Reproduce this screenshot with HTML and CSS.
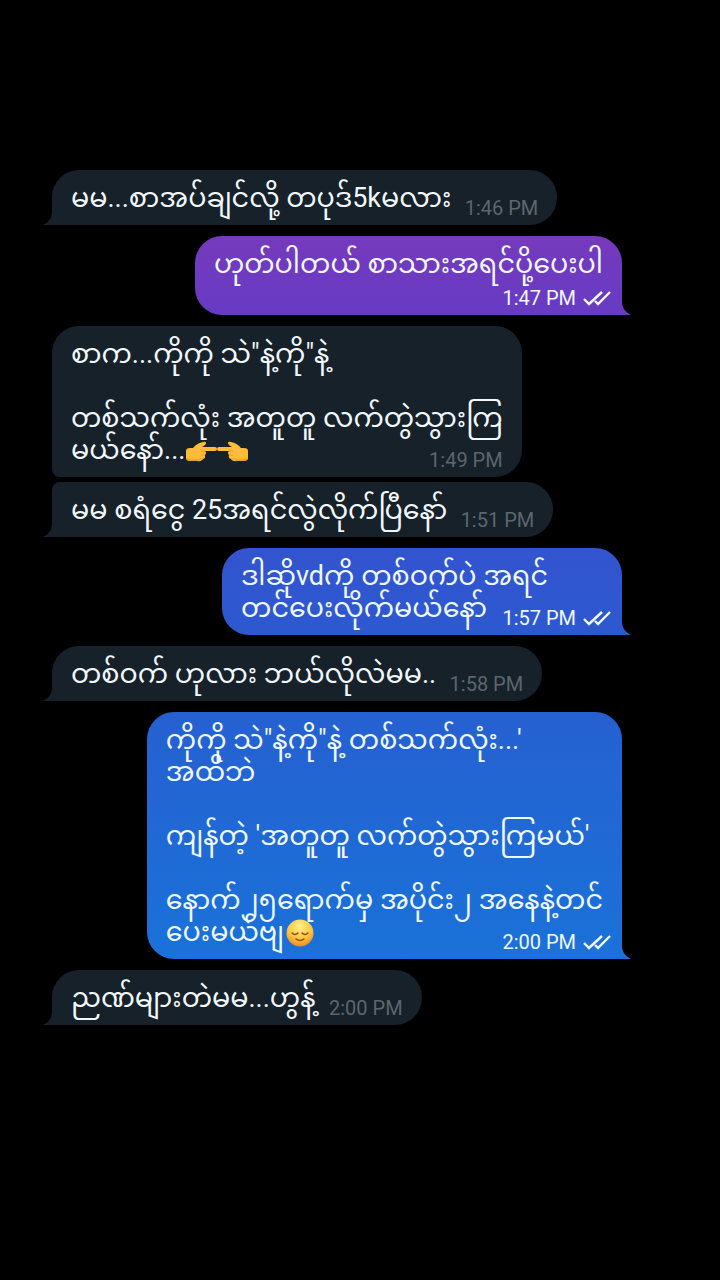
FILE: index.html
```
<!DOCTYPE html>
<html lang="my">
<head>
  <meta charset="UTF-8">
  <meta name="viewport" content="width=device-width, initial-scale=1">
  <title>Chat</title>
  <link rel="stylesheet" href="styles.css">
</head>
<body>
  <!-- shared shapes -->
  <svg class="defs" aria-hidden="true">
    <symbol id="checks" viewBox="0 0 28 16">
      <path d="M1 9 L6 14 L19 2 M12 11 L15 14 L27 2" fill="none" stroke="currentColor" stroke-width="2.400"/>
    </symbol>
    <symbol id="tail" viewBox="0 0 9 14">
      <path d="M0 0 C0 7 3 11 9 14 H0 Z" fill="currentColor"/>
    </symbol>
    <symbol id="hand" viewBox="0 0 32 24">
      <path d="M1 11 Q1 8 5 8 L8 8 Q12 3 18 2 Q21 1 21 3 Q21 5 17 7 L30 7 Q32 7 32 9 Q32 11 30 11 L20 11 Q22 13 20 15 Q21 18 18 19 Q16 22 12 21 L5 21 Q1 21 1 18 Z" fill="#ffbd37"/>
      <path d="M20 11 H16 M20 15 H16 M18 19 H14" fill="none" stroke="#e8992a" stroke-width="1"/>
      <path d="M2 19 Q6 21 14 20" fill="none" stroke="#ee9a28" stroke-width="1.500"/>
    </symbol>
  </svg>

  <main class="chat">
    <div class="message in">
      <p class="text">မမ...စာအပ်ချင်လို့ တပုဒ်5kမလား<span class="spacer"></span></p>
      <time class="time">1:46 PM</time>
      <svg class="tail"><use href="#tail"/></svg>
    </div>

    <div class="message out purple time-below">
      <p class="text">ဟုတ်ပါတယ် စာသားအရင်ပို့ပေးပါ</p>
      <time class="time">1:47 PM <svg class="checks"><use href="#checks"/></svg></time>
      <svg class="tail"><use href="#tail"/></svg>
    </div>

    <div class="message in group-first">
      <p class="text">စာက...ကိုကို သဲ"နဲ့ကို"နဲ့<br><br>တစ်သက်လုံး အတူတူ လက်တွဲသွားကြ<br>မယ်နော်...<svg class="hand" role="img" aria-label="👉"><use href="#hand"/></svg><svg class="hand flip" role="img" aria-label="👈"><use href="#hand"/></svg></p>
      <time class="time">1:49 PM</time>
    </div>

    <div class="message in group-last">
      <p class="text">မမ စရံငွေ 25အရင်လွဲလိုက်ပြီနော်<span class="spacer"></span></p>
      <time class="time">1:51 PM</time>
      <svg class="tail"><use href="#tail"/></svg>
    </div>

    <div class="message out indigo">
      <p class="text">ဒါဆိုvdကို တစ်ဝက်ပဲ အရင်<br>တင်ပေးလိုက်မယ်နော်<span class="spacer"></span></p>
      <time class="time">1:57 PM <svg class="checks"><use href="#checks"/></svg></time>
      <svg class="tail"><use href="#tail"/></svg>
    </div>

    <div class="message in">
      <p class="text">တစ်ဝက် ဟုလား ဘယ်လိုလဲမမ..<span class="spacer"></span></p>
      <time class="time">1:58 PM</time>
      <svg class="tail"><use href="#tail"/></svg>
    </div>

    <div class="message out blue">
      <p class="text">ကိုကို သဲ"နဲ့ကို"နဲ့ တစ်သက်လုံး...'<br>အထိဘဲ<br><br>ကျန်တဲ့ 'အတူတူ လက်တွဲသွားကြမယ်'<br><br>နောက်၂၅ရောက်မှ အပိုင်း၂ အနေနဲ့တင်<br>ပေးမယ်ဗျ<svg class="face" viewBox="0 0 28 28" role="img" aria-label="😌">
        <defs>
          <radialGradient id="skin" cx="50%" cy="25%" r="75%">
            <stop offset="0" stop-color="#fff08a"/>
            <stop offset="0.600" stop-color="#fcc63e"/>
            <stop offset="1" stop-color="#ee8a25"/>
          </radialGradient>
        </defs>
        <circle cx="14" cy="14" r="13.500" fill="url(#skin)"/>
        <path d="M6 14 Q9 17 12 14 M16 14 Q19 17 22 14 M10 20 Q14 23 18 20" fill="none" stroke="#8a4a16" stroke-width="1.500" stroke-linecap="round"/>
      </svg></p>
      <time class="time">2:00 PM <svg class="checks"><use href="#checks"/></svg></time>
      <svg class="tail"><use href="#tail"/></svg>
    </div>

    <div class="message in">
      <p class="text">ညဏ်များတဲမမ...ဟွန့်<span class="spacer"></span></p>
      <time class="time">2:00 PM</time>
      <svg class="tail"><use href="#tail"/></svg>
    </div>
  </main>
</body>
</html>
```

FILE: styles.css
```
* {
  box-sizing: border-box;
}
body {
  margin: 0;
  min-height: 100vh;
  background: #000;
  font-family: Roboto, "Noto Sans Myanmar", "Noto Sans", sans-serif;
}
.defs {
  display: none;
}
.chat {
  display: flex;
  flex-direction: column;
  gap: 11px;
  padding: 170px 98px 40px 52px;
}

/* text and time share one grid cell, the spacer keeps them apart */
.message {
  position: relative;
  display: grid;
  max-width: 100%;
  padding: 12px 19px 11px;
  border-radius: 27px;
}
.text,
.time {
  grid-area: 1 / 1;
}
.text {
  margin: 0;
  font-size: 27px;
  line-height: 32px;
}
.time {
  align-self: end;
  justify-self: end;
  font-size: 20px;
  line-height: 24px;
  margin-bottom: -6px;
  white-space: nowrap;
}
.spacer {
  display: inline-block;
  width: 87px;
}
.time-below .time {
  grid-area: 2 / 1;
  margin-top: 6px;
}

.in {
  align-self: flex-start;
  background: #16212a;
  color: #f2f8fb;
  border-bottom-left-radius: 0;
}
.in .time {
  color: #5c666e;
}
.out {
  align-self: flex-end;
  color: #f0f8ff;
  border-bottom-right-radius: 0;
}
.out .time {
  margin-right: -8px;
}
.out .spacer {
  width: 116px;
}
.purple {
  background: linear-gradient(#763abc, #663bc4);
}
.indigo {
  background: linear-gradient(#3354cf, #2d59d0);
}
.blue {
  background: linear-gradient(#2660d1, #1a72d9);
}

/* two bubbles in a row from the same person */
.group-first {
  border-bottom-left-radius: 8px;
}
.group-last {
  margin-top: -6px;
  border-top-left-radius: 8px;
}

.tail {
  position: absolute;
  bottom: 0;
  width: 9px;
  height: 14px;
}
.in .tail {
  right: 100%;
  color: #16212a;
  transform: scaleX(-1);
}
.out .tail {
  left: 100%;
}
.purple .tail {
  color: #663bc4;
}
.indigo .tail {
  color: #2d59d0;
}
.blue .tail {
  color: #1a72d9;
}

.checks {
  width: 28px;
  height: 16px;
  margin-left: 2px;
  vertical-align: -1px;
}
.hand {
  width: 32px;
  height: 24px;
  vertical-align: -5px;
}
.flip {
  transform: scaleX(-1);
}
.face {
  width: 28px;
  height: 28px;
  margin-left: 2px;
  vertical-align: -6px;
}
```
